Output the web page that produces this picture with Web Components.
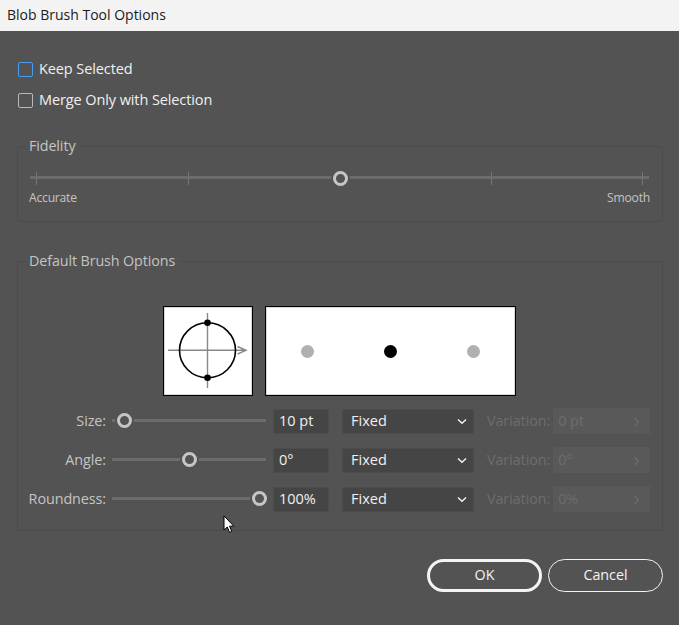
<!DOCTYPE html>
<html><head><meta charset="utf-8">
<style>
html,body{margin:0;padding:0;background:#535353}
body{width:679px;height:625px;overflow:hidden;font-family:"Open Sans","Noto Sans",sans-serif}
</style></head><body>
<blob-dialog></blob-dialog>
<script>
const FONT='"Open Sans","Noto Sans",sans-serif';
function def(name,css,html){
  customElements.define(name,class extends HTMLElement{
    constructor(){super();this.attachShadow({mode:'open'});}
    connectedCallback(){
      if(this._d)return;this._d=1;
      this.shadowRoot.innerHTML='<style>'+css+'</style>'+(typeof html==='function'?html(this):html);
    }
  });
}
def('title-bar',`:host{display:flex;align-items:center;height:31px;background:#f3f3f3;color:#1a1a1a;padding:0 0 2px 7px;box-sizing:border-box;font:14px/1 ${FONT}}`,`<slot></slot>`);
def('check-row',`:host{display:flex;align-items:center;gap:6px;height:16px;font:14.5px/16px ${FONT};color:#f0f0f0;letter-spacing:-.1px}
.b{width:15px;height:15px;box-sizing:border-box;border:1px solid var(--c,#b9b9b9);border-radius:2px}`,`<div class="b"></div><slot></slot>`);
def('group-box',`:host{display:block}
fieldset{margin:0;border:1px solid #4b4b4b;border-radius:3px;padding:0;height:var(--h);box-sizing:border-box;min-width:0}
legend{margin-left:7px;padding:0 5px 0 4px;font:14.3px/18px ${FONT};color:#c4c4c4;letter-spacing:-.1px;height:18px}`,
 h=>`<fieldset><legend>${h.getAttribute('label')}</legend><slot></slot></fieldset>`);
def('fidelity-slider',`:host{display:block;padding:16px 13px 0 12px;color:#c4c4c4;font:12.2px/16px ${FONT}}
.t{height:14px;position:relative;display:flex;align-items:center;justify-content:space-between;padding:0 6px}
.l{position:absolute;left:0;right:0;top:5px;height:3px;background:#6c6c6c}
i{display:block;width:1px;height:13px;background:#747474;position:relative}
.k{position:absolute;left:303px;top:0;width:15px;height:15px;box-sizing:border-box;border:3px solid #c6c6c6;border-radius:50%;background:#535353;box-shadow:0 0 0 2px #535353}
.s{display:flex;justify-content:space-between;margin:5px -1px 0 -1px;letter-spacing:-.25px}`,
`<div class="t"><div class="l"></div><i></i><i></i><i></i><i></i><i></i><div class="k"></div></div><div class="s"><span>Accurate</span><span>Smooth</span></div>`);
def('brush-preview',`:host{display:flex;justify-content:center;gap:12px;padding-top:36px;padding-right:1px}
.box{height:90px;box-sizing:border-box;border:1px solid #000;box-shadow:inset 0 0 0 1px #d8d8d8;background:#fff;display:flex;align-items:center}
.a{width:90px;padding:1px}
.p{width:251px;justify-content:space-between;padding:0 35px}
.p i{display:block;width:13px;height:13px;border-radius:50%;background:#b0b0b0}
.p i.m{background:#000}
svg{display:block}`,
`<div class="box a"><svg width="86" height="86" viewBox="0 0 86 86"><g stroke="#888" stroke-width="1.4" fill="none"><path d="M3 42.300H81M72.500 38.500L81 42.300L72.500 46"/><path d="M42.500 5V80"/></g><ellipse cx="42.500" cy="42.300" rx="28" ry="27.500" fill="none" stroke="#000" stroke-width="1.600"/><circle cx="42.500" cy="14.800" r="3.300"/><circle cx="42.500" cy="69.800" r="3.300"/></svg></div>
<div class="box p"><i></i><i class="m"></i><i></i></div>`);
def('value-slider',`:host{display:block;position:relative;width:154px;height:16px}
.l{position:absolute;left:0;right:0;top:6px;height:3px;background:#6c6c6c}
.k{position:absolute;top:0;width:15px;height:15px;box-sizing:border-box;border:3px solid #c6c6c6;border-radius:50%;background:#535353;box-shadow:0 0 0 2px #535353}`,
 h=>`<div class="l"></div><div class="k" style="left:${h.getAttribute('at')}px"></div>`);
def('num-field',`:host{display:flex;align-items:center;width:56px;height:25px;box-sizing:border-box;background:#454545;border:1px solid #4c4c4c;border-radius:2px;padding:1px 0 0 5px;color:#f0f0f0;font:14.5px/1 ${FONT}}`,`<slot></slot>`);
def('mode-select',`:host{display:flex;align-items:center;justify-content:space-between;width:132px;height:25px;box-sizing:border-box;background:#454545;border:1px solid #4c4c4c;border-radius:2px;padding:1px 6px 0 8px;color:#f0f0f0;font:14.5px/1 ${FONT}}
svg{display:block}`,`<slot></slot><svg width="10" height="7" viewBox="0 0 10 7"><path d="M1 1.500L5 5.200L9 1.500" fill="none" stroke="#f0f0f0" stroke-width="1.500"/></svg>`);
def('variation-field',`:host{display:flex;align-items:center;gap:3px;color:#6d6d6d;font:14.3px/1 ${FONT};letter-spacing:-.05px}
.b{width:97px;height:26px;box-sizing:border-box;background:#595959;display:flex;align-items:center;justify-content:space-between;padding:1px 10px 0 5px}
svg{display:block}`,
 h=>`<span>Variation:</span><div class="b"><span>${h.getAttribute('value')}</span><svg width="7" height="10" viewBox="0 0 7 10"><path d="M1.500 1L5.500 5L1.500 9" fill="none" stroke="#6d6d6d" stroke-width="1.200"/></svg></div>`);
def('param-row',`:host{display:flex;align-items:center;height:26px}
.n{width:88px;text-align:right;color:#c4c4c4;font:14.4px/1 ${FONT};letter-spacing:-.1px;margin-right:6px;padding-top:1px}
.s{margin-right:7px}
.m{margin:0 13px}`,
 h=>`<span class="n">${h.getAttribute('label')}</span><value-slider class="s" at="${h.getAttribute('at')}"></value-slider><num-field>${h.getAttribute('value')}</num-field><mode-select class="m">Fixed</mode-select><variation-field value="${h.getAttribute('vary')}"></variation-field>`);
def('pill-button',`:host{display:flex;align-items:center;justify-content:center;width:115px;height:33px;box-sizing:border-box;border:var(--w,1.500px) solid #f4f4f4;border-radius:17px;color:#f4f4f4;font:14.3px/1 ${FONT}}`,`<slot></slot>`);
def('mouse-cursor',`:host{position:absolute;left:223px;top:515px;display:block;width:13px;height:20px}svg{display:block}`,
`<svg width="13" height="20" viewBox="0 0 13 20"><path d="M1 .8V15L4.300 12L6.600 17.400L8.800 16.400L6.500 11.200H10.800Z" fill="#fff" stroke="#000" stroke-width="1"/></svg>`);
def('blob-dialog',`:host{display:block;position:relative;width:679px;height:625px;background:#535353}
.c{padding:30px 16px 0 18px;display:block}
.checks{display:flex;flex-direction:column;gap:15px}
.g1{margin-top:29px;margin-left:-1px;--h:85px}
.g2{margin-top:30px;margin-left:-1px;--h:279px}
.rows{display:flex;flex-direction:column;gap:13px;margin-top:12px}
.btns{display:flex;justify-content:flex-end;gap:6px;margin-top:28px}`,
`<title-bar>Blob Brush Tool Options</title-bar>
<div class="c">
<div class="checks"><check-row style="--c:#4a9cf0">Keep Selected</check-row><check-row>Merge Only with Selection</check-row></div>
<group-box class="g1" label="Fidelity"><fidelity-slider></fidelity-slider></group-box>
<group-box class="g2" label="Default Brush Options"><brush-preview></brush-preview>
<div class="rows"><param-row label="Size:" at="5" value="10 pt" vary="0 pt"></param-row><param-row label="Angle:" at="70" value="0°" vary="0°"></param-row><param-row label="Roundness:" at="140" value="100%" vary="0%"></param-row></div>
</group-box>
<div class="btns"><pill-button style="--w:3px">OK</pill-button><pill-button>Cancel</pill-button></div>
</div><mouse-cursor></mouse-cursor>`);
</script>
</body></html>
